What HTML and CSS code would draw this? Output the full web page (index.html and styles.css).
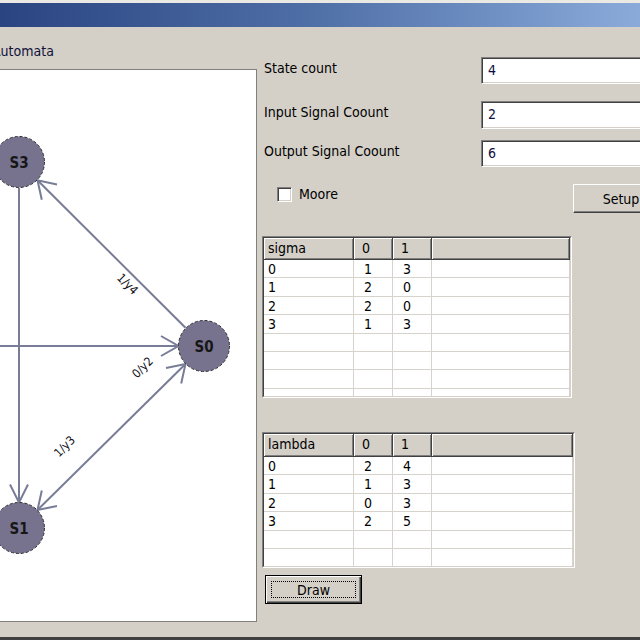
FILE: index.html
```html
<!DOCTYPE html>
<html>
<head>
<meta charset="utf-8">
<title>Automata</title>
<link rel="stylesheet" href="styles.css">
</head>
<body>
<div class="window">
  <div class="titlebar"></div>
  <div class="client">
    <section class="group">
      <div class="caption">Automata</div>
      <div class="canvas">
        <svg class="graph" width="315" height="551" viewBox="-59 70 315 551">
          <g class="edges">
            <line x1="19" y1="188" x2="19" y2="502"/>
            <path d="M10 484.5 L19 502.5 L28 484.5"/>
            <line x1="-160" y1="346" x2="178" y2="346"/>
            <path d="M161 336 L178.5 346 L161 356"/>
            <line x1="185.5" y1="327.7" x2="37.5" y2="180.3"/>
            <path d="M57 184.4 L37.5 180.3 L41.8 199.8"/>
            <line x1="37.5" y1="510" x2="185.5" y2="364"/>
            <path d="M166 368 L185.5 364 L181.2 383.5"/>
            <path d="M57 506 L37.5 510 L41.8 490.5"/>
            <path d="M-8 136 L-1 139"/>
            <path d="M-8 186.5 L-1 186.5"/>
          </g>
          <g class="nodes">
            <circle cx="19" cy="162" r="25.5"/>
            <circle cx="204" cy="346" r="25.5"/>
            <circle cx="19" cy="528" r="25.5"/>
          </g>
          <g class="node-names">
            <text x="19" y="168">S3</text>
            <text x="204" y="352">S0</text>
            <text x="19" y="534">S1</text>
          </g>
          <g class="edge-labels">
            <text transform="translate(127.5 284) rotate(45)">1/y4</text>
            <text transform="translate(142.5 367.5) rotate(-45)">0/y2</text>
            <text transform="translate(64.5 446.5) rotate(-45)">1/y3</text>
          </g>
        </svg>
      </div>
    </section>

    <section class="form">
      <div class="field f1"><span class="label">State count</span><div class="input">4</div></div>
      <div class="field f2"><span class="label">Input Signal Coount</span><div class="input">2</div></div>
      <div class="field f3"><span class="label">Output Signal Coount</span><div class="input">6</div></div>

      <div class="opts">
        <label class="check"><span class="box"></span>Moore</label>
        <button class="btn setup">Setup</button>
      </div>

      <div class="grid sigma">
        <div class="grid-inner">
          <div class="row head"><span>sigma</span><span class="n">0</span><span class="n">1</span><span></span></div>
          <div class="row"><span>0</span><span class="n">1</span><span class="n">3</span><span></span></div>
          <div class="row"><span>1</span><span class="n">2</span><span class="n">0</span><span></span></div>
          <div class="row"><span>2</span><span class="n">2</span><span class="n">0</span><span></span></div>
          <div class="row"><span>3</span><span class="n">1</span><span class="n">3</span><span></span></div>
          <div class="row"><span></span><span></span><span></span><span></span></div>
          <div class="row"><span></span><span></span><span></span><span></span></div>
          <div class="row"><span></span><span></span><span></span><span></span></div>
          <div class="row"><span></span><span></span><span></span><span></span></div>
        </div>
      </div>

      <div class="grid lambda">
        <div class="grid-inner">
          <div class="row head"><span>lambda</span><span class="n">0</span><span class="n">1</span><span></span></div>
          <div class="row"><span>0</span><span class="n">2</span><span class="n">4</span><span></span></div>
          <div class="row"><span>1</span><span class="n">1</span><span class="n">3</span><span></span></div>
          <div class="row"><span>2</span><span class="n">0</span><span class="n">3</span><span></span></div>
          <div class="row"><span>3</span><span class="n">2</span><span class="n">5</span><span></span></div>
          <div class="row"><span></span><span></span><span></span><span></span></div>
          <div class="row"><span></span><span></span><span></span><span></span></div>
        </div>
      </div>

      <button class="btn draw"><span class="focus">Draw</span></button>
    </section>
  </div>
</div>
</body>
</html>
```

FILE: styles.css
```css
html, body {
  margin: 0;
  padding: 0;
}

body {
  width: 640px;
  height: 640px;
  overflow: hidden;
  background: #d4d0c8;
  font-family: "DejaVu Sans Condensed", "DejaVu Sans", "Liberation Sans", sans-serif;
  font-size: 14px;
  color: #000;
}

.window {
  height: 640px;
  box-sizing: border-box;
  display: flex;
  flex-direction: column;
  border-top: 3px solid #ebe9e3;
  border-bottom: 3px solid #404040;
}

.titlebar {
  flex: none;
  height: 24px;
  background: linear-gradient(to right, #2a4482, #5070a8 50%, #8aabda);
}

.client {
  flex: 1;
  display: flex;
  min-height: 0;
}

/* ---------- left: automata group ---------- */
.group {
  flex: none;
  width: 317px;
  margin-left: -60px;
}

.caption {
  margin-top: 16px;
  height: 16px;
  line-height: 16px;
  padding-left: 52px;
  color: #10103a;
}

.canvas {
  margin-top: 10px;
  height: 553px;
  box-sizing: border-box;
  border: 1px solid #808080;
  background: #fff;
}

.graph {
  display: block;
}

.edges line,
.edges path {
  stroke: #787c97;
  stroke-width: 2;
  fill: none;
}

.nodes circle {
  fill: #77738f;
  stroke: #2a2a2a;
  stroke-width: 1;
  stroke-dasharray: 3 2;
}

.node-names text {
  font-family: "DejaVu Sans Condensed", "DejaVu Sans", sans-serif;
  font-weight: bold;
  font-size: 15px;
  fill: #161616;
  text-anchor: middle;
}

.edge-labels text {
  font-family: "DejaVu Sans Condensed", "DejaVu Sans", sans-serif;
  font-size: 12px;
  fill: #101018;
  text-anchor: middle;
  dominant-baseline: central;
}

/* ---------- right: form ---------- */
.form {
  flex: 1;
  min-width: 0;
  display: flex;
  flex-direction: column;
  align-items: flex-start;
}

.field {
  display: flex;
  flex: none;
  height: 27px;
}

.f1 { margin-top: 30px; }
.f2 { margin-top: 17px; height: 28px; }
.f3 { margin-top: 11px; }

.label {
  flex: none;
  width: 224px;
  box-sizing: border-box;
  padding-left: 7px;
  padding-top: 3px;
  line-height: 16px;
  white-space: nowrap;
}

.input {
  flex: none;
  width: 190px;
  height: 100%;
  box-sizing: border-box;
  border: 1px solid;
  border-color: #808080 #ffffff #ffffff #808080;
  box-shadow: inset 1px 1px #404040, inset -1px -1px #d4d0c8;
  background: #fff;
  padding: 1px 0 0 6px;
  line-height: 23px;
  color: #0c0c40;
}

.opts {
  flex: none;
  margin-top: 17px;
  height: 29px;
  display: grid;
  grid-template-columns: 316px 96px;
}

.check {
  margin-left: 20px;
  margin-top: 2px;
  height: 16px;
  display: flex;
  align-items: center;
  gap: 7px;
  line-height: 16px;
}

.box {
  width: 15px;
  height: 15px;
  box-sizing: border-box;
  border: 1px solid;
  border-color: #808080 #ffffff #ffffff #808080;
  box-shadow: inset 1px 1px #404040, inset -1px -1px #d4d0c8;
  background: #fff;
}

.btn {
  font: inherit;
  color: #000;
  background: #d4d0c8;
  margin: 0;
  padding: 0;
  box-sizing: border-box;
}

.setup {
  width: 96px;
  height: 29px;
  border: 1px solid;
  border-color: #ffffff #404040 #404040 #ffffff;
  box-shadow: inset -1px -1px #808080;
  padding-top: 1px;
}

/* ---------- grids ---------- */
.grid {
  flex: none;
  margin-left: 5px;
  box-sizing: border-box;
  border: 1px solid;
  border-color: #808080 #ffffff #ffffff #808080;
  overflow: hidden;
}

.grid-inner {
  height: 100%;
  box-sizing: border-box;
  border: 1px solid;
  border-color: #404040 #d4d0c8 #d4d0c8 #404040;
  background: #fff;
  overflow: hidden;
}

.sigma {
  margin-top: 23px;
  width: 310px;
  height: 162px;
}

.lambda {
  margin-top: 34px;
  width: 313px;
  height: 136px;
}

.row {
  display: grid;
  grid-template-columns: 90px 39px 39px 1fr;
  height: 18.4px;
  box-sizing: border-box;
  border-bottom: 1px solid #d6d3cd;
}

.row > span {
  border-right: 1px solid #d6d3cd;
  padding: 2px 0 0 4px;
  line-height: 15px;
  white-space: nowrap;
  overflow: hidden;
}

.row > span.n {
  padding-left: 10px;
}

.row.head {
  height: 22px;
  border-bottom: 1px solid #404040;
  background: #d4d0c8;
}

.lambda .row.head {
  height: 23px;
}

.row.head > span {
  border-right: 1px solid #404040;
  box-shadow: inset 1px 1px #ffffff, inset -1px -1px #808080;
  padding: 3px 0 0 4px;
}

.row.head > span.n {
  padding-left: 8px;
}

/* ---------- draw button ---------- */
.draw {
  flex: none;
  margin-top: 7px;
  margin-left: 8px;
  width: 97px;
  height: 29px;
  border: 1px solid #000;
  box-shadow: inset 1px 1px #ffffff, inset -1px -1px #404040, inset -2px -2px #808080;
  padding: 5px;
  display: flex;
}

.focus {
  flex: 1;
  border: 1px dotted #000;
  display: flex;
  align-items: center;
  justify-content: center;
  line-height: 16px;
}
```
